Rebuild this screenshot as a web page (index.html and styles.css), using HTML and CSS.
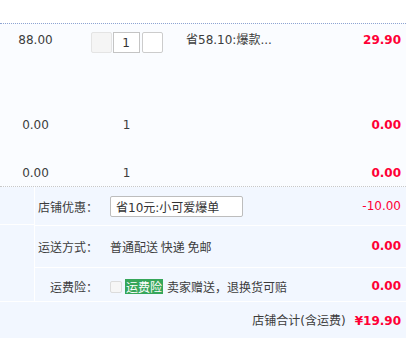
FILE: index.html
```html
<!DOCTYPE html>
<html lang="zh-CN">
<head>
  <meta charset="UTF-8">
  <title>订单</title>
  <link rel="stylesheet" href="styles.css">
</head>
<body>
  <div class="order">
    <div class="items">
      <div class="item item-main">
        <div class="col-price">88.00</div>
        <div class="col-qty">
          <div class="qty">
            <span class="qty-btn qty-minus"></span>
            <input class="qty-input" type="text" value="1">
            <span class="qty-btn qty-plus"></span>
          </div>
        </div>
        <div class="col-promo">省58.10:爆款...</div>
        <div class="col-sum">29.90</div>
      </div>
      <div class="item item-gift">
        <div class="col-price">0.00</div>
        <div class="col-qty">1</div>
        <div class="col-promo"></div>
        <div class="col-sum">0.00</div>
      </div>
      <div class="item item-last">
        <div class="col-price">0.00</div>
        <div class="col-qty">1</div>
        <div class="col-promo"></div>
        <div class="col-sum">0.00</div>
      </div>
    </div>

    <div class="shop">
      <div class="shop-side">
        <div class="side-top"></div>
      </div>
      <div class="shop-rows">
        <div class="shop-row row-coupon">
          <div class="shop-label">店铺优惠：</div>
          <div class="shop-value">
            <input class="coupon-input" type="text" value="省10元:小可爱爆单">
          </div>
          <div class="shop-amount amount-thin">-10.00</div>
        </div>
        <div class="shop-row row-delivery">
          <div class="shop-label">运送方式：</div>
          <div class="shop-value">普通配送 快递 免邮</div>
          <div class="shop-amount">0.00</div>
        </div>
        <div class="shop-row row-insure">
          <div class="shop-label">运费险：</div>
          <div class="shop-value">
            <span class="check"></span>
            <span class="insure-tag">运费险</span>
            <span class="insure-text">卖家赠送，退换货可赔</span>
          </div>
          <div class="shop-amount">0.00</div>
        </div>
      </div>
    </div>

    <div class="shop-total">
      <span class="total-label">店铺合计(含运费)</span>
      <span class="total-sum">¥19.90</span>
    </div>
  </div>
</body>
</html>
```

FILE: styles.css
```css
* {
  margin: 0;
  padding: 0;
  box-sizing: border-box;
}

body {
  background: #fff;
  font-family: "DejaVu Sans", "Noto Sans CJK SC", sans-serif;
  font-size: 12px;
  color: #3c3c3c;
}

.order {
  width: 406px;
  margin-top: 23px;
}

.items {
  background: #fafcff;
  border-top: 1px dotted #8ea4d2;
  border-bottom: 1px dotted #c8c8c8;
}

.item {
  display: flex;
  align-items: flex-start;
  line-height: 17px;
}

.item-main {
  height: 33px;
  padding-top: 8px;
}

.item-gift {
  height: 92px;
  padding-top: 60px;
}

.item-last {
  height: 37px;
  padding-top: 16px;
}

.col-price {
  width: 71px;
  text-align: center;
}

.col-qty {
  width: 71px;
  margin-left: 20px;
  display: flex;
  justify-content: center;
}

.col-promo {
  flex: 1;
  margin-left: 24px;
}

.col-sum {
  padding-right: 5px;
  color: #ff0036;
  font-weight: bold;
}

.qty {
  display: flex;
  gap: 1px;
}

.qty-btn {
  width: 21px;
  height: 21px;
  border: 1px solid #ccc;
  border-radius: 2px;
  background: #fff;
}

.qty-minus {
  background: #f5f5f5;
  border-color: #e4e4e4;
}

.qty-plus {
  margin-left: 1px;
}

.qty-input {
  width: 27px;
  height: 21px;
  border: 1px solid #c4c4c4;
  background: #fff;
  text-align: center;
  font-family: inherit;
  font-size: 12px;
  color: #333;
  outline: none;
}

.shop {
  display: flex;
  background: #f2f7ff;
  border-bottom: 1px solid #fff;
}

.shop-side {
  width: 35px;
  border-right: 1px solid #fff;
}

.side-top {
  height: 38px;
  border-bottom: 1px solid #fff;
}

.shop-rows {
  flex: 1;
}

.shop-row {
  display: flex;
  align-items: center;
  line-height: 17px;
  border-bottom: 1px solid #fff;
}

.row-coupon {
  height: 39px;
}

.row-delivery {
  height: 42px;
}

.row-insure {
  height: 33px;
  padding-top: 4px;
  border-bottom: none;
}

.shop-label {
  width: 63px;
  text-align: right;
  font-family: "Noto Sans CJK SC", sans-serif;
}

.shop-value {
  flex: 1;
  display: flex;
  align-items: center;
  margin-left: 12px;
  font-family: "Noto Sans CJK SC", sans-serif;
}

.shop-amount {
  padding-right: 5px;
  color: #ff0036;
  font-weight: bold;
}

.amount-thin {
  font-weight: normal;
}

.coupon-input {
  width: 133px;
  height: 21px;
  padding-left: 5px;
  border: 1px solid #bdbdbd;
  border-radius: 2px;
  background: #fff;
  font-family: "DejaVu Sans", "Noto Sans CJK SC", sans-serif;
  font-size: 12px;
  color: #333;
  outline: none;
}

.check {
  width: 12px;
  height: 12px;
  border: 1px solid #dcdcdc;
  border-radius: 2px;
  background: #f6f6f6;
}

.insure-tag {
  margin-left: 3px;
  padding: 0 1px;
  height: 15px;
  line-height: 15px;
  background: #36a65a;
  color: #fff;
}

.insure-text {
  margin-left: 4px;
}

.shop-total {
  display: flex;
  justify-content: flex-end;
  align-items: center;
  height: 36px;
  padding-top: 2px;
  padding-right: 5px;
  background: #f2f7ff;
  line-height: 17px;
}

.total-sum {
  margin-left: 9px;
  color: #ff0036;
  font-weight: bold;
}
```
